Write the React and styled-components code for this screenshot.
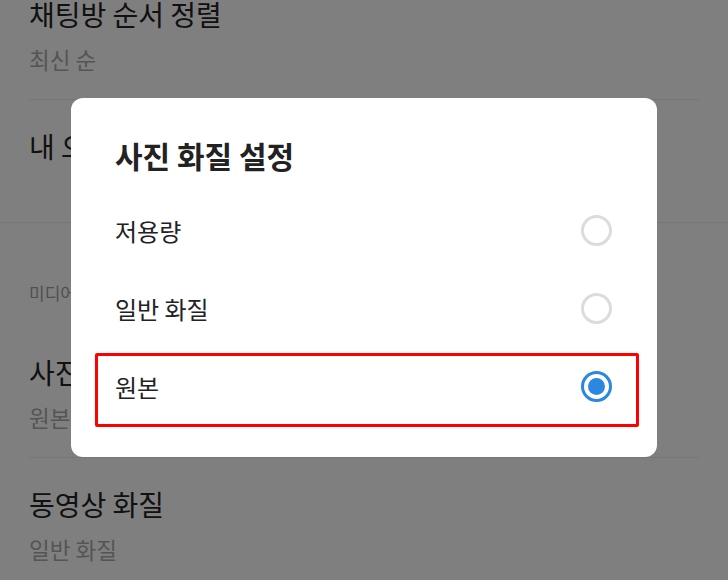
import React from 'react';
import styled, { createGlobalStyle, css } from 'styled-components';

const GlobalStyle = createGlobalStyle`
  html, body {
    margin: 0;
    padding: 0;
    background: #fff;
    overflow: hidden;
  }
  body {
    font-family: "Noto Sans CJK KR", "Noto Sans", sans-serif;
    color: #222;
  }
`;

const Page = styled.div`
  width: 728px;
  height: 580px;
  overflow: hidden;
  position: relative;
`;

const List = styled.div`
  margin-top: -32px;
  display: flex;
  flex-direction: column;
`;

const Row = styled.div`
  display: flex;
  flex-direction: column;
  padding: 26px 29px ${(p) => p.$bottom || 25}px;
`;

const RowTitle = styled.div`
  font-size: 28px;
  line-height: 40px;
  color: #222;
  white-space: nowrap;
`;

const RowSub = styled.div`
  margin-top: 10px;
  font-size: 22.5px;
  line-height: 30px;
  color: #aaa;
`;

const Divider = styled.div`
  height: 1px;
  background: #ececec;
  margin: ${(p) => (p.$full ? '0' : '0 29px')};
`;

const SectionHeader = styled.div`
  padding: 58px 29px 21px;
  font-size: 17px;
  line-height: 24px;
  color: #a0a0a0;
`;

const Overlay = styled.div`
  position: absolute;
  inset: 0;
  background: rgba(0, 0, 0, 0.5);
  display: flex;
  justify-content: center;
  align-items: flex-start;
  padding-top: 98px;
`;

const Dialog = styled.div`
  width: 586px;
  box-sizing: border-box;
  background: #fff;
  border-radius: 12px;
  padding: 37px 18px 32px 24px;
  display: flex;
  flex-direction: column;
`;

const DialogTitle = styled.div`
  padding-left: 20px;
  font-size: 30px;
  line-height: 40px;
  font-weight: 700;
  color: #222;
  margin-bottom: 16px;
`;

const Option = styled.div`
  position: relative;
  height: 78px;
  display: flex;
  align-items: center;
  justify-content: space-between;
  padding: 0 27px 0 20px;
  font-size: 24px;
  color: #222;

  ${(p) =>
    p.$highlight &&
    css`
      &::after {
        content: '';
        position: absolute;
        top: 6px;
        bottom: -2px;
        left: 0;
        right: 0;
        border: 3px solid #ff0000;
        border-radius: 2px;
      }
    `}
`;

const Radio = styled.span`
  width: 31px;
  height: 31px;
  box-sizing: border-box;
  border-radius: 50%;
  border: 3px solid ${(p) => (p.$checked ? '#2b87e0' : '#dcdcdc')};
  display: flex;
  align-items: center;
  justify-content: center;

  &::before {
    content: '';
    width: 17px;
    height: 17px;
    border-radius: 50%;
    background: ${(p) => (p.$checked ? '#2b87e0' : 'transparent')};
  }
`;

const options = [
  { label: '저용량', checked: false },
  { label: '일반 화질', checked: false },
  { label: '원본', checked: true },
];

export default function App() {
  return (
    <Page>
      <GlobalStyle />
      <List>
        <Row>
          <RowTitle>채팅방 순서 정렬</RowTitle>
          <RowSub>최신 순</RowSub>
        </Row>
        <Divider />
        <Row $bottom={56}>
          <RowTitle>내 오픈채팅 프로필</RowTitle>
        </Row>
        <Divider $full />
        <SectionHeader>미디어</SectionHeader>
        <Row>
          <RowTitle>사진 화질</RowTitle>
          <RowSub>원본</RowSub>
        </Row>
        <Divider />
        <Row>
          <RowTitle>동영상 화질</RowTitle>
          <RowSub>일반 화질</RowSub>
        </Row>
      </List>
      <Overlay>
        <Dialog>
          <DialogTitle>사진 화질 설정</DialogTitle>
          {options.map((o) => (
            <Option key={o.label} $highlight={o.checked}>
              <span>{o.label}</span>
              <Radio $checked={o.checked} />
            </Option>
          ))}
        </Dialog>
      </Overlay>
    </Page>
  );
}
